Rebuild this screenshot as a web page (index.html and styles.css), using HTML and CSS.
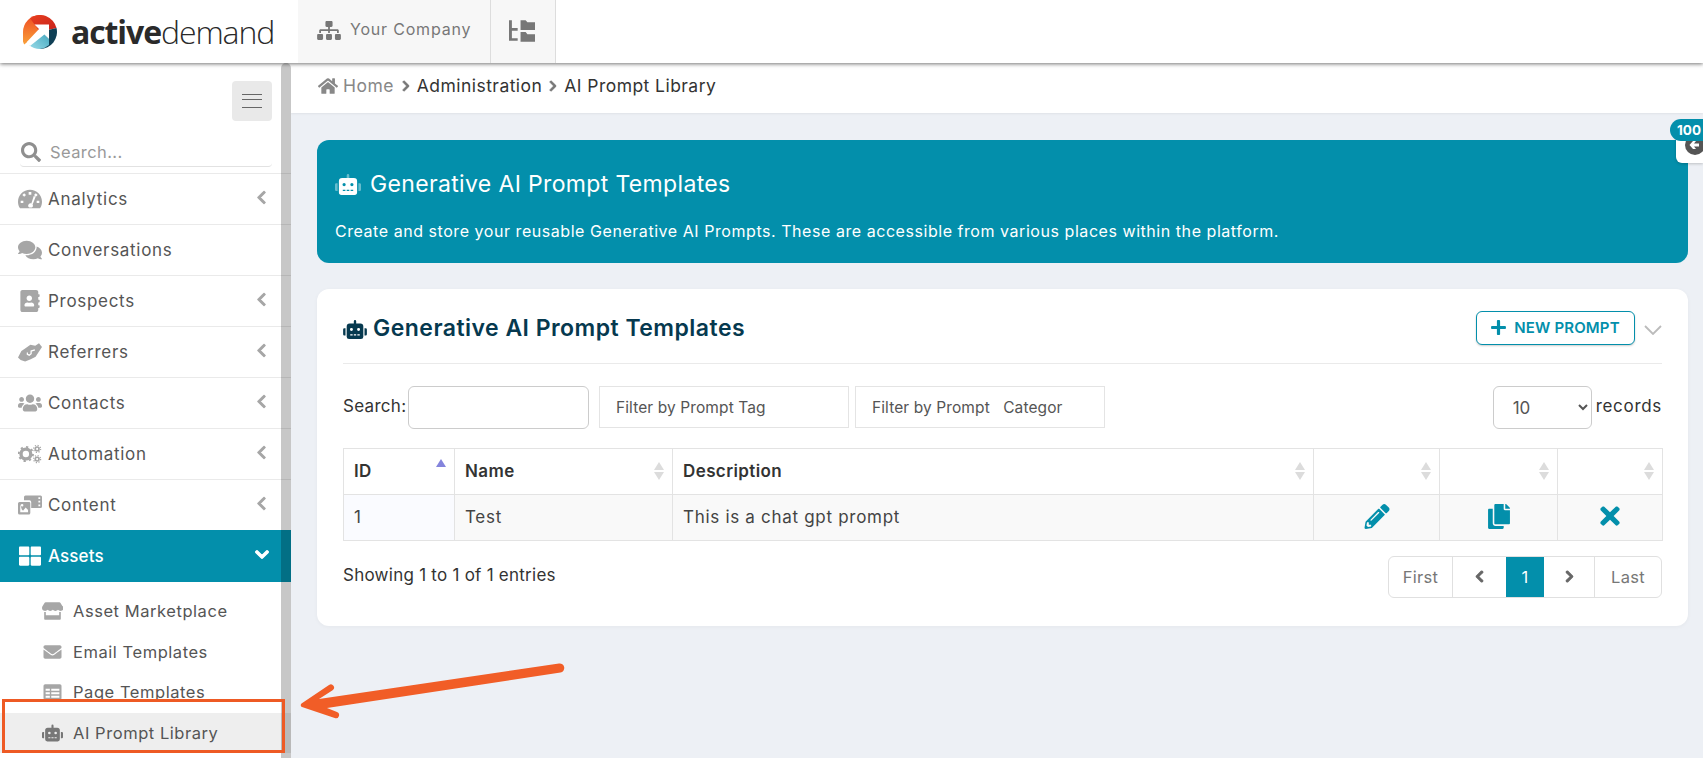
FILE: index.html
```html
<!DOCTYPE html>
<html lang="en">
<head>
<meta charset="utf-8">
<title>AI Prompt Library</title>
<link rel="stylesheet" href="styles.css">
</head>
<body>
<svg class="sprite" xmlns="http://www.w3.org/2000/svg">
  <symbol id="home" viewBox="0 0 576 512"><path d="M280.37 148.26L96 300.11V464a16 16 0 0 0 16 16l112.06-.29a16 16 0 0 0 15.92-16V368a16 16 0 0 1 16-16h64a16 16 0 0 1 16 16v95.64a16 16 0 0 0 16 16.05L464 480a16 16 0 0 0 16-16V300L295.67 148.26a12.19 12.19 0 0 0-15.3 0zM571.6 251.47L488 182.56V44.05a12 12 0 0 0-12-12h-56a12 12 0 0 0-12 12v72.61L318.47 43a48 48 0 0 0-61 0L4.34 251.47a12 12 0 0 0-1.6 16.9l25.5 31A12 12 0 0 0 45.15 301l235.22-193.74a12.19 12.19 0 0 1 15.3 0L530.9 301a12 12 0 0 0 16.9-1.6l25.5-31a12 12 0 0 0-1.7-16.93z"/></symbol>
  <symbol id="search" viewBox="0 0 512 512"><path d="M505 442.7L405.3 343c-4.5-4.5-10.6-7-17-7H372c27.6-35.3 44-79.7 44-128C416 93.1 322.9 0 208 0S0 93.1 0 208s93.1 208 208 208c48.3 0 92.7-16.4 128-44v16.3c0 6.4 2.5 12.5 7 17l99.7 99.7c9.4 9.4 24.6 9.4 33.9 0l28.3-28.3c9.4-9.4 9.4-24.6.1-34zM208 336c-70.7 0-128-57.2-128-128 0-70.7 57.2-128 128-128 70.7 0 128 57.2 128 128 0 70.7-57.2 128-128 128z"/></symbol>
  <symbol id="robot" viewBox="0 0 640 512"><path d="M32,224H64V416H32A31.96166,31.96166,0,0,1,0,384V256A31.96166,31.96166,0,0,1,32,224Zm512-48V448a64.06328,64.06328,0,0,1-64,64H160a64.06328,64.06328,0,0,1-64-64V176a79.974,79.974,0,0,1,80-80H288V32a32,32,0,0,1,64,0V96H464A79.974,79.974,0,0,1,544,176ZM264,256a40,40,0,1,0-40,40A39.997,39.997,0,0,0,264,256Zm-8,128H192v32h64Zm96,0H288v32h64ZM456,256a40,40,0,1,0-40,40A39.997,39.997,0,0,0,456,256Zm-8,128H384v32h64ZM640,256V384a31.96166,31.96166,0,0,1-32,32H576V224h32A31.96166,31.96166,0,0,1,640,256Z"/></symbol>
  <symbol id="robot-duo" viewBox="0 0 640 512"><path opacity=".4" d="M32 224h32v192H32a32 32 0 0 1-32-32V256a32 32 0 0 1 32-32zM608 224h-32v192h32a32 32 0 0 0 32-32V256a32 32 0 0 0-32-32zM288 96V32a32 32 0 0 1 64 0v64z"/><path d="M544 176v272a64 64 0 0 1-64 64H160a64 64 0 0 1-64-64V176a80 80 0 0 1 80-80h288a80 80 0 0 1 80 80zM264 256a40 40 0 1 0-40 40 40 40 0 0 0 40-40zm-8 128h-64v32h64zm96 0h-64v32h64zm104-128a40 40 0 1 0-40 40 40 40 0 0 0 40-40zm-8 128h-64v32h64z"/></symbol>
  <symbol id="chev-left" viewBox="0 0 320 512"><path d="M34.52 239.03L228.87 44.69c9.37-9.37 24.57-9.37 33.94 0l22.67 22.67c9.36 9.36 9.37 24.52.04 33.9L131.49 256l154.02 154.75c9.34 9.38 9.32 24.54-.04 33.9l-22.67 22.67c-9.37 9.37-24.57 9.37-33.94 0L34.52 272.97c-9.37-9.37-9.37-24.57 0-33.94z"/></symbol>
  <symbol id="chev-right" viewBox="0 0 320 512"><path d="M285.476 272.971L91.132 467.314c-9.373 9.373-24.569 9.373-33.941 0l-22.667-22.667c-9.357-9.357-9.375-24.522-.04-33.901L188.505 256 34.484 101.255c-9.335-9.379-9.317-24.544.04-33.901l22.667-22.667c9.373-9.373 24.569-9.373 33.941 0L285.475 239.03c9.373 9.372 9.373 24.568.001 33.941z"/></symbol>
  <symbol id="chev-down" viewBox="0 0 448 512"><path d="M207.029 381.476L12.686 187.132c-9.373-9.373-9.373-24.569 0-33.941l22.667-22.667c9.357-9.357 24.522-9.375 33.901-.04L224 284.505l154.745-154.021c9.379-9.335 24.544-9.317 33.901.04l22.667 22.667c9.373 9.373 9.373 24.569 0 33.941L240.971 381.476c-9.373 9.372-24.569 9.372-33.942 0z"/></symbol>
  <symbol id="plus" viewBox="0 0 448 512"><path d="M416 208H272V64c0-17.67-14.33-32-32-32h-32c-17.67 0-32 14.33-32 32v144H32c-17.67 0-32 14.33-32 32v32c0 17.67 14.33 32 32 32h144v144c0 17.67 14.33 32 32 32h32c17.67 0 32-14.33 32-32V304h144c17.67 0 32-14.33 32-32v-32c0-17.67-14.33-32-32-32z"/></symbol>
  <symbol id="times" viewBox="0 0 352 512"><path d="M242.72 256l100.07-100.07c12.28-12.28 12.28-32.19 0-44.48l-22.24-22.24c-12.28-12.28-32.19-12.28-44.48 0L176 189.28 75.93 89.21c-12.28-12.28-32.19-12.28-44.48 0L9.21 111.45c-12.28 12.28-12.28 32.19 0 44.48L109.28 256 9.21 356.07c-12.28 12.28-12.28 32.19 0 44.48l22.24 22.24c12.28 12.28 32.2 12.28 44.48 0L176 322.72l100.07 100.07c12.28 12.28 32.2 12.28 44.48 0l22.24-22.24c12.28-12.28 12.28-32.19 0-44.48L242.72 256z"/></symbol>
  <symbol id="pencil" viewBox="0 0 512 512"><path d="M497.9 142.1l-46.1 46.1c-4.7 4.7-12.3 4.7-17 0l-111-111c-4.7-4.7-4.7-12.3 0-17l46.1-46.1c18.7-18.7 49.1-18.7 67.9 0l60.1 60.1c18.8 18.7 18.8 49.1 0 67.9zM284.2 99.8L21.6 362.4.4 483.9c-2.9 16.4 11.4 30.6 27.8 27.8l121.5-21.3 262.6-262.6c4.7-4.7 4.7-12.3 0-17l-111-111c-4.8-4.7-12.4-4.7-17.1 0zM124.1 339.9c-5.5-5.5-5.5-14.3 0-19.8l154-154c5.5-5.5 14.3-5.5 19.8 0s5.5 14.3 0 19.8l-154 154c-5.5 5.5-14.3 5.5-19.8 0zM88 424h48v36.3l-64.5 11.3-31.1-31.1L51.7 376H88v48z"/></symbol>
  <symbol id="copy" viewBox="0 0 448 512"><path d="M320 448v40c0 13.255-10.745 24-24 24H24c-13.255 0-24-10.745-24-24V120c0-13.255 10.745-24 24-24h72v296c0 30.879 25.121 56 56 56h168zm0-344V0H152c-13.255 0-24 10.745-24 24v368c0 13.255 10.745 24 24 24h272c13.255 0 24-10.745 24-24V128H344c-13.2 0-24-10.8-24-24zm120.971-31.029L375.029 7.029A24 24 0 0 0 358.059 0H352v96h96v-6.059a24 24 0 0 0-7.029-16.97z"/></symbol>
  <symbol id="envelope" viewBox="0 0 512 512"><path d="M502.3 190.8c3.9-3.1 9.7-.2 9.7 4.7V400c0 26.5-21.5 48-48 48H48c-26.5 0-48-21.5-48-48V195.6c0-5 5.7-7.8 9.7-4.7 22.4 17.4 52.1 39.5 154.1 113.6 21.1 15.4 56.7 47.8 92.2 47.6 35.7.3 72-32.8 92.3-47.6 102-74.1 131.6-96.3 154-113.7zM256 320c23.2.4 56.6-29.2 73.4-41.4 132.7-96.3 142.8-104.7 173.4-128.7 5.8-4.5 9.2-11.5 9.2-18.9v-19c0-26.5-21.5-48-48-48H48C21.5 64 0 85.5 0 112v19c0 7.4 3.4 14.3 9.2 18.9 30.6 23.9 40.7 32.4 173.4 128.7 16.8 12.2 50.2 41.8 73.4 41.4z"/></symbol>
  <symbol id="users" viewBox="0 0 640 512"><path d="M96 224c35.3 0 64-28.7 64-64s-28.7-64-64-64-64 28.7-64 64 28.7 64 64 64zm448 0c35.3 0 64-28.7 64-64s-28.7-64-64-64-64 28.7-64 64 28.7 64 64 64zm32 32h-64c-17.6 0-33.5 7.1-45.1 18.6 40.3 22.1 68.9 62 75.1 109.4h66c17.7 0 32-14.3 32-32v-32c0-35.3-28.7-64-64-64zm-256 0c61.9 0 112-50.1 112-112S381.9 32 320 32 208 82.1 208 144s50.1 112 112 112zm76.8 32h-8.3c-20.8 10-43.9 16-68.5 16s-47.6-6-68.5-16h-8.3C179.6 288 128 339.6 128 403.2V432c0 26.5 21.5 48 48 48h288c26.5 0 48-21.5 48-48v-28.8c0-63.6-51.6-115.2-115.2-115.2zm-223.7-13.4C161.5 263.1 145.6 256 128 256H64c-35.3 0-64 28.7-64 64v32c0 17.7 14.3 32 32 32h65.9c6.3-47.4 34.9-87.3 75.2-109.4z"/></symbol>
  <symbol id="comments" viewBox="0 0 576 512"><path d="M416 192c0-88.4-93.1-160-208-160S0 103.6 0 192c0 34.3 14.1 65.9 38 92-13.4 30.2-35.5 54.2-35.8 54.5-2.2 2.3-2.8 5.7-1.5 8.7S4.8 352 8 352c36.6 0 66.9-12.3 88.7-25 32.2 15.7 70.3 25 111.3 25 114.9 0 208-71.6 208-160zm122 220c23.9-26 38-57.7 38-92 0-66.9-53.5-124.2-129.3-148.1.9 6.6 1.3 13.3 1.3 20.1 0 105.9-107.7 192-240 192-10.8 0-21.3-.8-31.7-1.9C207.8 439.6 281.8 480 368 480c41 0 79.1-9.2 111.3-25 21.8 12.7 52.1 25 88.7 25 3.2 0 6.1-1.9 7.3-4.8 1.3-2.9.7-6.3-1.5-8.7-.3-.3-22.4-24.2-35.8-54.5z"/></symbol>
  <symbol id="grid" viewBox="0 0 512 512"><path d="M296 32h192c13.255 0 24 10.745 24 24v160c0 13.255-10.745 24-24 24H296c-13.255 0-24-10.745-24-24V56c0-13.255 10.745-24 24-24zm-80 0H24C10.745 32 0 42.745 0 56v160c0 13.255 10.745 24 24 24h192c13.255 0 24-10.745 24-24V56c0-13.255-10.745-24-24-24zM0 296v160c0 13.255 10.745 24 24 24h192c13.255 0 24-10.745 24-24V296c0-13.255-10.745-24-24-24H24c-13.255 0-24 10.745-24 24zm296 184h192c13.255 0 24-10.745 24-24V296c0-13.255-10.745-24-24-24H296c-13.255 0-24 10.745-24 24v160c0 13.255 10.745 24 24 24z"/></symbol>
  <symbol id="sitemap" viewBox="0 0 640 512"><path d="M128 352H32c-17.67 0-32 14.33-32 32v96c0 17.67 14.33 32 32 32h96c17.67 0 32-14.33 32-32v-96c0-17.67-14.33-32-32-32zm-24-80h192v48h48v-48h192v48h48v-57.59c0-21.17-17.23-38.41-38.41-38.41H344v-64h40c17.67 0 32-14.33 32-32V32c0-17.67-14.33-32-32-32H256c-17.67 0-32 14.33-32 32v96c0 17.67 14.33 32 32 32h40v64H94.41C73.23 224 56 241.23 56 262.41V320h48v-48zm264 80h-96c-17.67 0-32 14.33-32 32v96c0 17.67 14.33 32 32 32h96c17.67 0 32-14.33 32-32v-96c0-17.67-14.33-32-32-32zm240 0h-96c-17.67 0-32 14.33-32 32v96c0 17.67 14.33 32 32 32h96c17.67 0 32-14.33 32-32v-96c0-17.67-14.33-32-32-32z"/></symbol>
  <symbol id="addr" viewBox="0 0 448 512"><path d="M436 160c6.6 0 12-5.4 12-12v-40c0-6.6-5.4-12-12-12h-20V48c0-26.5-21.5-48-48-48H48C21.5 0 0 21.5 0 48v416c0 26.5 21.5 48 48 48h320c26.5 0 48-21.5 48-48v-48h20c6.6 0 12-5.4 12-12v-40c0-6.6-5.4-12-12-12h-20v-64h20c6.6 0 12-5.4 12-12v-40c0-6.6-5.4-12-12-12h-20v-64h20zm-228-32c35.3 0 64 28.7 64 64s-28.7 64-64 64-64-28.7-64-64 28.7-64 64-64zm112 236.8c0 10.6-10 19.2-22.4 19.2H118.4C106 384 96 375.4 96 364.8v-19.2c0-31.8 30.1-57.6 67.2-57.6h5c12.3 5.1 25.7 8 39.8 8s27.6-2.9 39.8-8h5c37.1 0 67.2 25.8 67.2 57.6v19.2z"/></symbol>
  <symbol id="gauge" viewBox="0 0 576 512"><path fill-rule="evenodd" d="M288 32C129 32 0 161 0 320c0 53 14 102 40 144 6 10 16 16 27 16h442c11 0 21-6 27-16 26-42 40-91 40-144C576 161 447 32 288 32zm-32 56h64v64h-64zM104 160l44-44 44 44-44 44zm368 0l-44 44-44-44 44-44zM64 296h64v56H64zm384 0h64v56h-64zm-70-112l46 16-74 190c18 24 8 58-18 72H274c-34-16-42-62-12-88 16-14 38-18 58-10z"/></symbol>
  <symbol id="shake" viewBox="0 0 640 512"><path d="M0 400L90 230l90-60L330 60l130 30L560 20l80 100-80 120-90 140-130 70-150 62-120-42z"/><path d="M250 270v50l50 20 50-40v-70l100-30" fill="none" stroke="#fff" stroke-width="34"/></symbol>
  <symbol id="cogs" viewBox="0 0 640 512"><g fill="none" stroke="currentColor"><circle cx="210" cy="256" r="130" stroke-width="90"/><circle cx="210" cy="256" r="190" stroke-width="50" stroke-dasharray="60 89"/><circle cx="510" cy="120" r="50" stroke-width="45"/><circle cx="510" cy="120" r="94" stroke-width="32" stroke-dasharray="32 42"/><circle cx="510" cy="392" r="50" stroke-width="45"/><circle cx="510" cy="392" r="94" stroke-width="32" stroke-dasharray="32 42"/></g></symbol>
  <symbol id="media" viewBox="0 0 640 512"><path d="M200 0h400a40 40 0 0 1 40 40v256a40 40 0 0 1-40 40H352V176a48 48 0 0 0-48-48H160V40a40 40 0 0 1 40-40zm344 48v48h48V48zm0 96v48h48v-48zm0 96v48h48v-48z"/><path fill-rule="evenodd" d="M40 176h256a32 32 0 0 1 32 32v264a40 40 0 0 1-40 40H40a40 40 0 0 1-40-40V216a40 40 0 0 1 40-40zm20 52v224h208v-60l-64-72-70 92-36-40zm50 0a34 34 0 1 0 0 68 34 34 0 0 0 0-68z"/></symbol>
  <symbol id="store" viewBox="0 0 616 512"><path d="M602 118L538 16C532 6 522 0 510 0H106C94 0 84 6 78 16L14 118c-32 52-4 126 60 134 5 1 9 1 14 1 30 0 57-13 76-34 19 21 46 34 76 34s57-13 76-34c19 21 46 34 76 34s57-13 76-34c19 21 46 34 76 34 5 0 9 0 14-1 64-8 92-82 60-134z"/><path d="M64 284v196c0 18 14 32 32 32h424c18 0 32-14 32-32V284c-8 2-16 3-24 3-8 0-16-1-24-3v100H112V284c-8 2-16 3-24 3s-16-1-24-3z"/></symbol>
  <symbol id="table" viewBox="0 0 512 512"><path fill-rule="evenodd" d="M48 32h416a48 48 0 0 1 48 48v352a48 48 0 0 1-48 48H48a48 48 0 0 1-48-48V80a48 48 0 0 1 48-48zm12 128v60h120v-60zm0 100v60h120v-60zm0 100v60h120v-60zm160-200v60h232v-60zm0 100v60h232v-60zm0 100v60h232v-60z"/></symbol>
  <symbol id="tree" viewBox="0 0 576 512"><path d="M0 16h64v176h128v56H64v168h128v56H0zM256 16h112l40 48h168v168H256zM256 280h112l40 48h168v168H256z"/></symbol>
  <symbol id="sort" viewBox="0 0 10 18"><path class="sort-up" d="M5 0l5 8H0z"/><path class="sort-down" d="M5 18l5-8H0z"/></symbol>
</svg>

<header class="topbar">
  <a class="logo">
    <svg class="logo-mark" viewBox="0 0 34 34">
      <defs>
        <linearGradient id="lg-red" x1="0" y1="0" x2="1" y2="1"><stop offset="0" stop-color="#e8401f"/><stop offset="1" stop-color="#c6201c"/></linearGradient>
        <linearGradient id="lg-or" x1="0" y1="0" x2="0" y2="1"><stop offset="0" stop-color="#ef4a22"/><stop offset="1" stop-color="#f9a13a"/></linearGradient>
        <linearGradient id="lg-bl" x1="0" y1="1" x2="1" y2="0"><stop offset="0" stop-color="#9adbe8"/><stop offset="1" stop-color="#3fa5bd"/></linearGradient>
      </defs>
      <path fill="url(#lg-or)" d="M17 0A17 17 0 0 0 0 17a17 17 0 0 0 1.200 12.500L17 17z"/>
      <path fill="url(#lg-red)" d="M7 3.200A17 17 0 0 1 33.500 13L17 17z"/>
      <path fill="#0f3f55" d="M33.500 13A17 17 0 0 1 17 34L17 17z"/>
      <path fill="url(#lg-bl)" d="M6 30l13-14 7 8v6a17 17 0 0 1-9 4 17 17 0 0 1-11-4z"/>
      <path fill="#fff" d="M11.500 9.500H26V24l-4.600-4.600L7 31 3.600 27.200 16 14z"/>
    </svg>
    <span class="logo-text"><b>active</b>demand</span>
  </a>
  <div class="top-tab top-tab-company">
    <svg class="ic ic-sitemap"><use href="#sitemap"/></svg>
    <span>Your Company</span>
  </div>
  <div class="top-tab top-tab-tree">
    <svg class="ic ic-tree"><use href="#tree"/></svg>
  </div>
</header>

<div class="shell">
  <aside class="sidebar">
    <div class="side-top">
      <button class="burger"><i></i><i></i></button>
    </div>
    <div class="side-search">
      <svg class="ic ic-search"><use href="#search"/></svg>
      <span>Search...</span>
    </div>
    <nav class="nav">
      <a class="nav-item"><svg class="ic ic-nav"><use href="#gauge"/></svg><span class="nav-label">Analytics</span><svg class="ic ic-chev"><use href="#chev-left"/></svg></a>
      <a class="nav-item"><svg class="ic ic-nav"><use href="#comments"/></svg><span class="nav-label">Conversations</span></a>
      <a class="nav-item"><svg class="ic ic-nav"><use href="#addr"/></svg><span class="nav-label">Prospects</span><svg class="ic ic-chev"><use href="#chev-left"/></svg></a>
      <a class="nav-item"><svg class="ic ic-nav"><use href="#shake"/></svg><span class="nav-label">Referrers</span><svg class="ic ic-chev"><use href="#chev-left"/></svg></a>
      <a class="nav-item"><svg class="ic ic-nav"><use href="#users"/></svg><span class="nav-label">Contacts</span><svg class="ic ic-chev"><use href="#chev-left"/></svg></a>
      <a class="nav-item"><svg class="ic ic-nav"><use href="#cogs"/></svg><span class="nav-label">Automation</span><svg class="ic ic-chev"><use href="#chev-left"/></svg></a>
      <a class="nav-item"><svg class="ic ic-nav"><use href="#media"/></svg><span class="nav-label">Content</span><svg class="ic ic-chev"><use href="#chev-left"/></svg></a>
      <a class="nav-item nav-item-active"><svg class="ic ic-nav"><use href="#grid"/></svg><span class="nav-label">Assets</span><svg class="ic ic-chev-down"><use href="#chev-down"/></svg></a>
      <div class="subnav">
        <a class="sub-item"><svg class="ic ic-sub"><use href="#store"/></svg><span>Asset Marketplace</span></a>
        <a class="sub-item"><svg class="ic ic-sub"><use href="#envelope"/></svg><span>Email Templates</span></a>
        <a class="sub-item"><svg class="ic ic-sub"><use href="#table"/></svg><span>Page Templates</span></a>
        <a class="sub-item sub-item-active"><svg class="ic ic-sub"><use href="#robot"/></svg><span>AI Prompt Library</span></a>
      </div>
    </nav>
    <div class="side-scroll"></div>
  </aside>

  <main class="main">
    <div class="crumbs">
      <svg class="ic ic-home"><use href="#home"/></svg>
      <span class="crumb-home">Home</span>
      <svg class="ic ic-crumb"><use href="#chev-right"/></svg>
      <span>Administration</span>
      <svg class="ic ic-crumb"><use href="#chev-right"/></svg>
      <span>AI Prompt Library</span>
    </div>
    <div class="content">
      <section class="banner">
        <h2 class="banner-title"><svg class="ic ic-banner"><use href="#robot-duo"/></svg>Generative AI Prompt Templates</h2>
        <p class="banner-text">Create and store your reusable Generative AI Prompts. These are accessible from various places within the platform.</p>
      </section>
      <section class="card">
        <div class="card-head">
          <h3 class="card-title"><svg class="ic ic-card"><use href="#robot"/></svg>Generative AI Prompt Templates</h3>
          <button class="btn-new"><svg class="ic ic-plus"><use href="#plus"/></svg>NEW PROMPT</button>
          <svg class="collapse" viewBox="0 0 18 10"><path d="M1 1l8 8 8-8"/></svg>
        </div>
        <div class="controls">
          <label class="search-label">Search:</label>
          <input class="search-input" type="text" aria-label="Search">
          <div class="filter filter-tag"><span>Filter by Prompt Tag</span></div>
          <div class="filter filter-cat"><span>Filter by Prompt&nbsp;&nbsp; Category</span></div>
          <select class="records-select" aria-label="Records"><option>10</option></select>
          <span class="records-label">records</span>
        </div>
        <table class="grid">
          <thead>
            <tr>
              <th class="col-id"><div class="th-in"><span>ID</span><svg class="sort sort-asc"><use href="#sort"/></svg></div></th>
              <th class="col-name"><div class="th-in"><span>Name</span><svg class="sort"><use href="#sort"/></svg></div></th>
              <th class="col-desc"><div class="th-in"><span>Description</span><svg class="sort"><use href="#sort"/></svg></div></th>
              <th class="col-a"><div class="th-in"><span></span><svg class="sort"><use href="#sort"/></svg></div></th>
              <th class="col-b"><div class="th-in"><span></span><svg class="sort"><use href="#sort"/></svg></div></th>
              <th class="col-c"><div class="th-in"><span></span><svg class="sort"><use href="#sort"/></svg></div></th>
            </tr>
          </thead>
          <tbody>
            <tr>
              <td class="cell-id">1</td>
              <td>Test</td>
              <td>This is a chat gpt prompt</td>
              <td class="cell-act"><svg class="ic ic-act"><use href="#pencil"/></svg></td>
              <td class="cell-act"><svg class="ic ic-act"><use href="#copy"/></svg></td>
              <td class="cell-act"><svg class="ic ic-act ic-x"><use href="#times"/></svg></td>
            </tr>
          </tbody>
        </table>
        <div class="card-foot">
          <span class="showing">Showing 1 to 1 of 1 entries</span>
          <div class="pager">
            <a class="pg pg-first">First</a>
            <a class="pg pg-prev"><svg class="ic ic-pg"><use href="#chev-left"/></svg></a>
            <a class="pg pg-cur">1</a>
            <a class="pg pg-next"><svg class="ic ic-pg"><use href="#chev-right"/></svg></a>
            <a class="pg pg-last">Last</a>
          </div>
        </div>
      </section>
    </div>
  </main>
</div>

<div class="float-tab"><svg viewBox="0 0 20 20"><circle cx="10" cy="10" r="10"/><path d="M14 8.500H9l2-2.500H8L4.500 10 8 14h3l-2-2.500h5z"/></svg></div>
<div class="float-badge">100</div>

<div class="mark-box"></div>
<svg class="mark-arrow" viewBox="0 0 300 80">
  <path d="M259 1.600a4.500 4.500 0 0 1 1.500 8.900L27 46l10 4a3.200 3.200 0 0 1-2.300 6L2 45a2 2 0 0 1-.5-3.400L29 23a3.200 3.200 0 0 1 3.600 5.300L19 37z"/>
</svg>
</body>
</html>
```
FILE: styles.css
```css
* { box-sizing: border-box; }
html, body { margin: 0; height: 758px; overflow: hidden; }
body {
  font-family: Inter, "Noto Sans", sans-serif;
  font-size: 15px;
  color: #333;
  background: #edf0f5;
  display: flex;
  flex-direction: column;
}
.sprite { display: none; }
.ic { fill: currentColor; display: block; flex: none; }
h2, h3, p { margin: 0; }

/* top bar */
.topbar {
  height: 63px;
  flex: none;
  display: flex;
  background: #fff;
  box-shadow: 0 1px 4px rgba(0, 0, 0, .55);
  position: relative;
  z-index: 3;
}
.logo { width: 298px; display: flex; align-items: center; padding-left: 23px; }
.logo-mark { width: 34px; height: 34px; flex: none; }
.logo-text {
  margin-left: 14px;
  font-family: "Open Sans", sans-serif;
  font-size: 32px;
  font-weight: 300;
  letter-spacing: -1.100px;
  color: #2a2a2a;
}
.logo-text b { font-weight: 700; }
.top-tab { background: #f7f7f7; border-right: 1px solid #ddd; display: flex; align-items: center; color: #777; }
.top-tab-company { width: 193px; padding: 0 0 5px 19px; gap: 9px; font-size: 16px; letter-spacing: .8px; }
.top-tab-company .ic { margin-top: 2px; }
.top-tab-tree { width: 65px; padding: 0 0 2px 18px; }
.ic-sitemap { width: 24px; height: 19px; }
.ic-tree { width: 26px; height: 24px; }

/* layout */
.shell { flex: 1; display: flex; min-height: 0; }

/* sidebar */
.sidebar { width: 291px; flex: none; background: #fff; position: relative; overflow: hidden; color: #555; }
.side-top { height: 58px; padding: 18px 19px 0 0; display: flex; justify-content: flex-end; }
.burger {
  width: 40px; height: 40px; border: 0; border-radius: 4px; background: #e9e9e9;
  display: flex; flex-direction: column; align-items: center; justify-content: center; gap: 3px; padding: 0;
}
.burger i { display: block; width: 20px; height: 6px; border-top: 1px solid #666; border-bottom: 1px solid #666; }
.burger i + i { border-top: 0; height: 5px; }
.side-search {
  margin: 18px 19px 0 20px;
  height: 28px;
  border-bottom: 1px solid #e2e2e2;
  border-radius: 0 0 4px 4px;
  display: flex; align-items: center; gap: 9px;
  color: #999; font-size: 16.500px; letter-spacing: .4px; padding: 0 0 2px 1px;
}
.ic-search { width: 20px; height: 20px; color: #8f8f8f; }
.nav { margin-top: 6px; border-top: 1px solid #eaeaea; }
.nav-item {
  height: 51px;
  padding: 0 24px 1px 18px;
  border-bottom: 1px solid #eaeaea;
  display: flex; align-items: center;
  font-size: 17px; letter-spacing: .7px;
}
.ic-nav { width: 24px; height: 22px; color: #a6a6a6; }
.nav-label { margin-left: 6px; flex: 1; }
.ic-chev { width: 11px; height: 15px; color: #a6a6a6; stroke: currentColor; stroke-width: 30px; margin-top: -3px; }
.nav-item-active {
  height: 52px; margin-top: -1px; position: relative;
  background: #038fab; color: #fff; border-bottom: 0; font-weight: 500; letter-spacing: .1px;
}
.nav-item-active .ic-nav { color: #fff; }
.ic-chev-down { width: 14px; height: 15px; color: #fff; margin: -3px -2px 0 0; stroke: currentColor; stroke-width: 40px; }
.subnav { padding-top: 9px; }
.sub-item {
  height: 40.500px;
  display: flex; align-items: center; gap: 10px;
  padding-left: 42px;
  font-size: 16.500px; letter-spacing: .55px;
}
.ic-sub { width: 21px; height: 18px; color: #a6a6a6; }
.sub-item-active { background: #eee; }
.sub-item-active .ic-sub { color: #777; }
.side-scroll {
  position: absolute; top: 0; right: 0; bottom: 0; width: 10px;
  background: rgba(0, 0, 0, .22);
  border-radius: 5px 5px 0 0;
}

/* main */
.main { flex: 1; min-width: 0; display: flex; flex-direction: column; }
.crumbs {
  height: 50px; flex: none; background: #fff;
  display: flex; align-items: center; gap: 5px;
  padding: 0 0 5px 27px;
  font-size: 17.500px; letter-spacing: .45px; color: #333;
  box-shadow: 0 1px 2px rgba(0, 0, 0, .06);
}
.ic-home { width: 20px; height: 18px; color: #888; }
.crumb-home { color: #888; margin-right: 1px; }
.ic-crumb { width: 10px; height: 12px; color: #777; margin: 0 1px; stroke: currentColor; stroke-width: 40px; }
.content { padding: 27px 15px 0 26px; }

.banner {
  height: 123px;
  border-radius: 12px;
  background: #038fab;
  color: #fff;
  padding: 29px 18px 0;
}
.banner-title { display: flex; align-items: center; gap: 9px; font-size: 23px; letter-spacing: .35px; font-weight: 400; height: 30px; }
.ic-banner { width: 26px; height: 21px; }
.banner-text { margin-top: 22px; font-size: 16px; letter-spacing: .55px; }

.card {
  margin-top: 26px;
  height: 337px;
  background: #fff;
  border-radius: 12px;
  padding: 22px 26px 0;
  box-shadow: 0 1px 4px rgba(0, 0, 0, .04);
}
.card-head { height: 53px; padding-bottom: 19px; border-bottom: 1px solid #eaeaea; display: flex; align-items: center; }
.card-title { flex: 1; display: flex; align-items: center; gap: 6px; font-size: 23px; letter-spacing: .47px; font-weight: 600; color: #06394f; height: 32px; }
.ic-card { width: 24px; height: 19px; margin-top: 3px; }
.btn-new {
  width: 159px; height: 34px;
  border: 1px solid #038fab; border-radius: 6px; background: #fff;
  box-shadow: 0 1px 2px rgba(0, 0, 0, .2);
  color: #038fab; font: 600 15px Inter, sans-serif; letter-spacing: .15px;
  display: flex; align-items: center; justify-content: center; gap: 8px; padding: 0;
}
.ic-plus { width: 15px; height: 17px; }
.collapse { width: 18px; height: 10px; margin: 4px 0 0 9px; fill: none; stroke: #bbb; stroke-width: 1.800; }

.controls { margin-top: 22px; height: 43px; display: flex; align-items: flex-start; font-size: 17px; letter-spacing: .3px; }
.search-label { width: 65px; line-height: 41px; white-space: nowrap; }
.search-input { width: 181px; height: 43px; border: 1px solid #ccc; border-radius: 6px; background: #fff; }
.filter {
  height: 42px; border: 1px solid #e4e4e4; display: flex; align-items: center;
  font-size: 15.500px; letter-spacing: .1px; color: #555; padding: 0 41px 0 16px; white-space: nowrap;
}
.filter span { overflow: hidden; display: block; }
.filter-tag { width: 250px; margin-left: 10px; }
.filter-cat { width: 250px; margin-left: 6px; margin-right: auto; }
.records-select {
  width: 99px; height: 43px; border: 1px solid #ccc; border-radius: 6px; background: #fff;
  padding-left: 15px; font: 17px Inter, sans-serif; color: #555;
}
.records-label { margin-left: 4px; line-height: 41px; letter-spacing: .7px; }

.grid { margin-top: 19px; width: 1319px; table-layout: fixed; border-collapse: collapse; font-size: 17px; }
.grid th, .grid td { border: 1px solid #e3e3e3; }
.grid th { height: 46px; padding: 0 8px 1px 10px; text-align: left; font-weight: 600; letter-spacing: .4px; }
.grid td { height: 46px; padding: 0 10px 1px; background: #f9f9f9; color: #444; letter-spacing: .7px; }
.grid .cell-id { background: #fafbff; }
.grid .cell-act { padding: 0 0 3px; color: #038fab; }
.col-id { width: 111px; }
.col-name { width: 218px; }
.col-desc { width: 641px; }
.col-a { width: 126px; }
.col-b { width: 118px; }
.col-c { width: 105px; }
.th-in { display: flex; align-items: center; justify-content: space-between; }
.sort { width: 10px; height: 18px; display: block; fill: #dcdcdc; }
.sort-asc { fill: #8484dc; clip-path: inset(0 0 10px 0); margin-top: -6px; }
.ic-act { width: 28px; height: 25px; margin: 0 auto; }
.ic-x { height: 28px; }

.card-foot { margin-top: 15px; height: 42px; display: flex; justify-content: space-between; align-items: flex-start; }
.showing { line-height: 38px; font-size: 17px; letter-spacing: .25px; }
.pager { display: flex; height: 42px; border: 1px solid #e0e0e0; border-radius: 6px; color: #777; font-size: 16.500px; letter-spacing: .3px; overflow: hidden; }
.pg { display: flex; align-items: center; justify-content: center; border-right: 1px solid #e0e0e0; padding-bottom: 1px; }
.pg-first { width: 64px; }
.pg-prev { width: 53px; border-right: 0; }
.pg-cur { width: 38px; background: #038fab; color: #fff; border-right: 0; }
.pg-next { width: 51px; }
.pg-last { width: 66px; border-right: 0; }
.ic-pg { width: 9px; height: 13px; color: #666; stroke: currentColor; stroke-width: 40px; }

/* floating badge */
.float-tab {
  position: absolute; top: 130px; right: 0; width: 27px; height: 33px;
  background: #fff; border-radius: 0 0 0 6px; z-index: 2; overflow: hidden;
  box-shadow: 0 1px 3px rgba(0, 0, 0, .2);
}
.float-tab svg { position: absolute; left: 9px; top: 5px; width: 20px; height: 20px; }
.float-tab circle { fill: #555; }
.float-tab path { fill: #fff; }
.float-badge {
  position: absolute; top: 119px; right: 0; width: 33px; height: 22px;
  background: #038fab; color: #fff; border-radius: 11px 0 0 11px;
  font-size: 13.500px; font-weight: 700; line-height: 22px; padding-left: 7px;
  z-index: 2; overflow: hidden;
}

/* annotation */
.mark-box { position: absolute; left: 2px; top: 699px; width: 283px; height: 54px; border: 3px solid #ee5a24; z-index: 4; }
.mark-arrow { position: absolute; left: 300px; top: 662px; width: 300px; height: 80px; fill: #f15d27; z-index: 4; }
```
